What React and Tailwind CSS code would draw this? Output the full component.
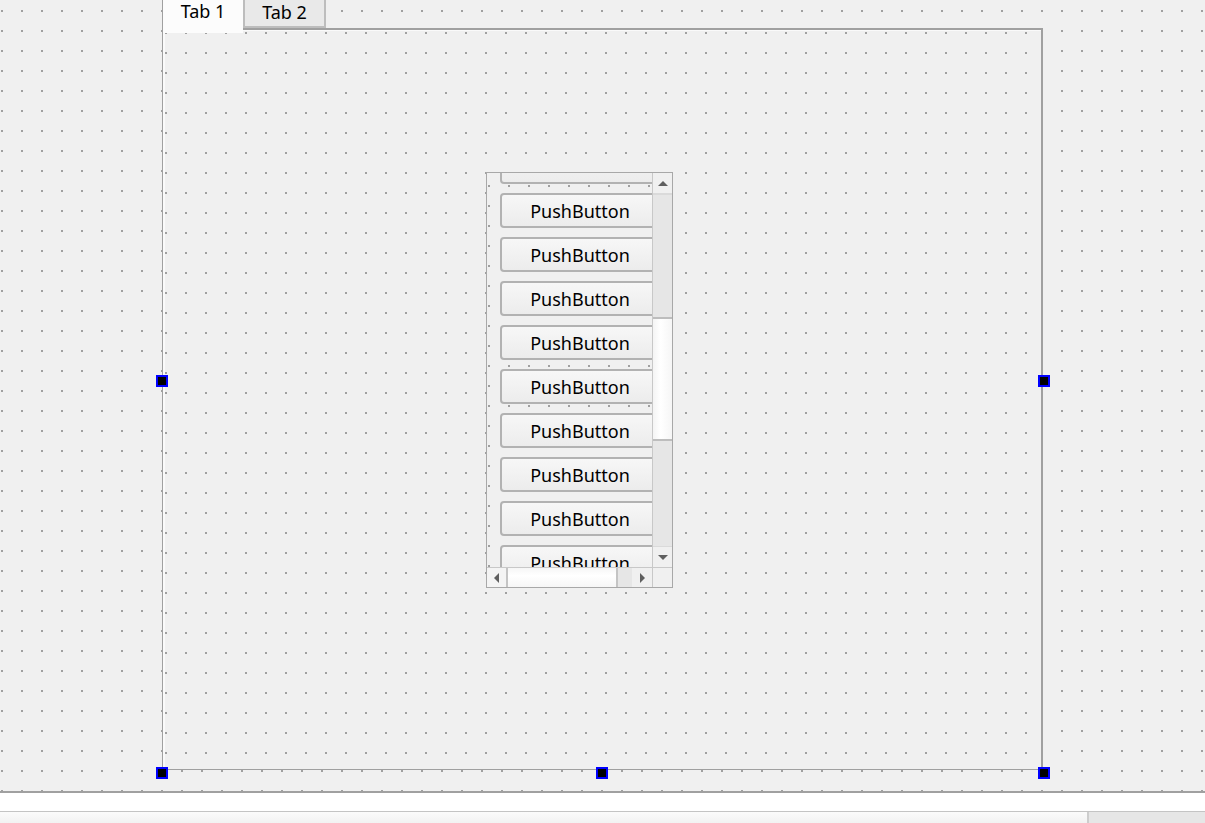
import React from "react";

function Handle({ className }) {
  return (
    <div
      className={
        "absolute w-[12px] h-[12px] border-2 border-[#0000ff] bg-black z-20 " +
        className
      }
    />
  );
}

function Arrow({ dir }) {
  const pts = {
    up: "0,5 5,0 10,5",
    down: "0,0 10,0 5,5",
    left: "5,0 5,10 0,5",
    right: "0,0 0,10 5,5",
  }[dir];
  const vertical = dir === "up" || dir === "down";
  return (
    <svg
      width={vertical ? 10 : 5}
      height={vertical ? 5 : 10}
      viewBox={vertical ? "0 0 10 5" : "0 0 5 10"}
    >
      <polygon points={pts} fill="#5f5f5f" />
    </svg>
  );
}

function PushButton({ label }) {
  return (
    <div className="w-[160px] h-[35px] shrink-0 rounded-[4px] border-2 border-[#b2b2b2] bg-[linear-gradient(#f7f7f7,#ececec)] flex items-center justify-center pt-[1px] text-[18px] leading-[24px] text-black">
      {label}
    </div>
  );
}

export default function App() {
  const buttons = Array.from({ length: 10 });
  return (
    <div className="w-[1205px] h-[823px] overflow-hidden flex flex-col relative font-['Noto_Sans','Open_Sans',sans-serif] bg-[#f0f0f0]">
      {/* designer canvas */}
      <div className="h-[791px] shrink-0 pl-[162px] bg-[#a0a0a0] [background-image:linear-gradient(90deg,#f0f0f0_18px,transparent_18px),linear-gradient(#f0f0f0_18px,transparent_18px)] [background-size:20px_20px] [background-position:3px_12px]">
        <div className="w-[881px] h-[770px] flex flex-col">
          {/* tab bar */}
          <div className="h-[28px] shrink-0 flex items-start relative z-10">
            <div className="w-[81px] h-[33px] shrink-0 bg-[#fcfcfc] border-l border-[#a0a0a0] flex justify-center text-[18px] leading-[22px] text-black">
              Tab 1
            </div>
            <div className="w-[83px] h-[28px] shrink-0 bg-[#e9e9e9] border-x-2 border-b-2 border-[#bdbdbd] flex justify-center text-[18px] leading-[24px] text-black">
              Tab 2
            </div>
          </div>
          {/* tab pane */}
          <div className="flex-1 border-l border-t-2 border-r-2 border-b border-[#a0a0a0] shadow-[inset_2px_1px_0_#fafafa] bg-[#a0a0a0] [background-image:linear-gradient(90deg,#f0f0f0_18px,transparent_18px),linear-gradient(#f0f0f0_18px,transparent_18px)] [background-size:20px_20px] [background-position:4px_4px] pl-[323px] pt-[142px]">
            {/* scroll area */}
            <div className="w-[187px] h-[416px] border border-[#a8a8a8] flex flex-col bg-[#f0f0f0]">
              <div className="flex h-[394px] shrink-0">
                <div className="w-[165px] h-[394px] overflow-hidden bg-[#a0a0a0] [background-image:linear-gradient(90deg,#f0f0f0_18px,transparent_18px),linear-gradient(#f0f0f0_18px,transparent_18px)] [background-size:20px_20px] [background-position:3px_14px]">
                  <div className="flex flex-col gap-[9px] mt-[-24px] pl-[13px]">
                    {buttons.map((_, i) => (
                      <PushButton key={i} label={i === 0 ? "" : "PushButton"} />
                    ))}
                  </div>
                </div>
                {/* vertical scrollbar */}
                <div className="w-[20px] flex flex-col border-l border-[#c8c8c8] bg-[#e6e6e6]">
                  <div className="h-[20px] shrink-0 bg-[#f0f0f0] flex items-center justify-center">
                    <Arrow dir="up" />
                  </div>
                  <div className="h-[124px] shrink-0 border-t-2 border-[#dadada]" />
                  <div className="h-[124px] shrink-0 border-y-2 border-[#bdbdbd] bg-[linear-gradient(90deg,#f4f4f4,#ffffff_40%,#f6f6f6)]" />
                  <div className="flex-1 border-b border-[#dadada]" />
                  <div className="h-[20px] shrink-0 bg-[#f0f0f0] flex items-center justify-center">
                    <Arrow dir="down" />
                  </div>
                </div>
              </div>
              {/* horizontal scrollbar row */}
              <div className="flex h-[20px] shrink-0 border-t border-[#c8c8c8]">
                <div className="w-[165px] flex bg-[#e6e6e6]">
                  <div className="w-[19px] shrink-0 bg-[#f4f4f4] flex items-center justify-center">
                    <Arrow dir="left" />
                  </div>
                  <div className="w-[112px] shrink-0 border-x-2 border-[#c4c4c4] bg-[linear-gradient(#f6f6f6,#ffffff_40%,#f6f6f6)]" />
                  <div className="flex-1" />
                  <div className="w-[20px] shrink-0 bg-[#f0f0f0] flex items-center justify-center">
                    <Arrow dir="right" />
                  </div>
                </div>
                <div className="flex-1 bg-[#f0f0f0] border-l border-[#c8c8c8]" />
              </div>
            </div>
          </div>
        </div>
      </div>

      {/* bottom area */}
      <div className="flex-1 flex flex-col border-t-2 border-[#a0a0a0]">
        <div className="h-[19px] shrink-0 bg-white border-b border-[#c4c4c4]" />
        <div className="flex-1 flex">
          <div className="w-[1087px] bg-[linear-gradient(#fbfbfb,#f2f2f2)]" />
          <div className="flex-1 border-l-2 border-[#cdcdcd] bg-[#e6e6e6]" />
        </div>
      </div>

      {/* selection handles */}
      <Handle className="left-[156px] top-[375px]" />
      <Handle className="left-[1038px] top-[375px]" />
      <Handle className="left-[156px] top-[767px]" />
      <Handle className="left-[596px] top-[767px]" />
      <Handle className="left-[1038px] top-[767px]" />
    </div>
  );
}
